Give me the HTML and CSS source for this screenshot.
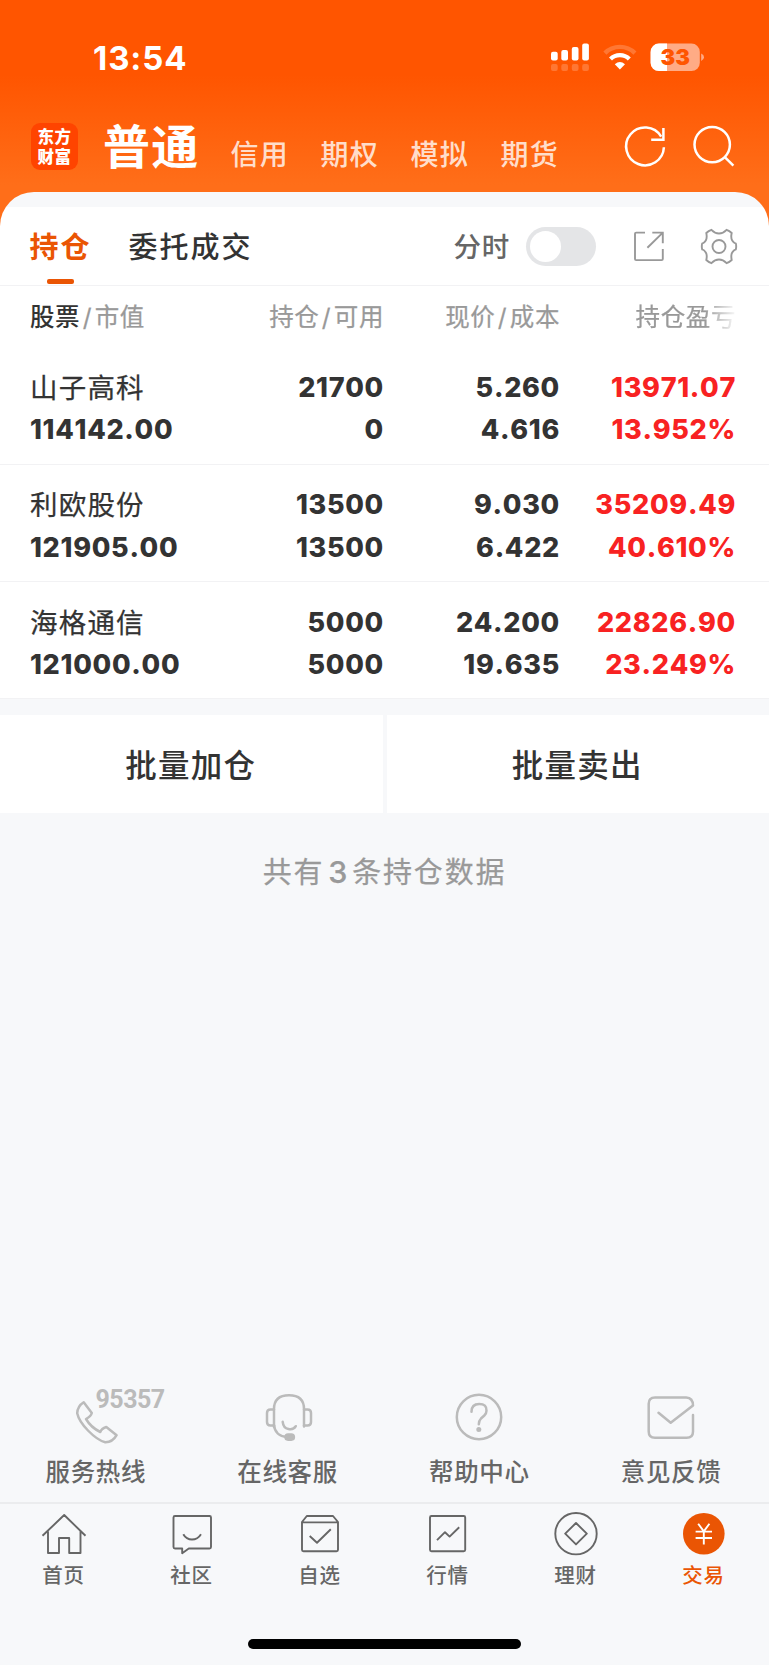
FILE: index.html
```html
<!DOCTYPE html>
<html lang="zh-CN">
<head>
<meta charset="utf-8">
<title>普通交易 - 持仓</title>
<link rel="stylesheet" href="styles.css">
</head>
<body>
<div class="app">
  <header class="hero">
    <div class="status">
      <span class="clock">13:54</span>
      <svg class="status-icons" viewBox="546 38 164 40" width="164" height="40">
        <g fill="#fff">
          <rect x="551" y="51.8" width="6.7" height="8.6" rx="2"/>
          <rect x="561.3" y="50" width="6.7" height="10.4" rx="2"/>
          <rect x="571.8" y="47" width="6.7" height="13.4" rx="2"/>
          <rect x="582.2" y="43.6" width="6.7" height="16.8" rx="2"/>
        </g>
        <g fill="#fff" opacity=".2">
          <rect x="551" y="64" width="6.7" height="7" rx="2"/>
          <rect x="561.3" y="64" width="6.7" height="7" rx="2"/>
          <rect x="571.8" y="64" width="6.7" height="7" rx="2"/>
          <rect x="582.2" y="64" width="6.7" height="7" rx="2"/>
        </g>
        <path d="M604.9 53.1A21.3 21.3 0 0 1 634.9 53.1" fill="none" stroke="#fff" stroke-opacity=".2" stroke-width="4.4"/>
        <path d="M610.5 59A13.2 13.2 0 0 1 629.3 59" fill="none" stroke="#fff" stroke-width="4.2"/>
        <path d="M614.8 64.3Q619.9 59.6 625 64.3L619.9 69.4Z" fill="#fff"/>
        <clipPath id="bat"><rect x="650.6" y="43.5" width="49.2" height="27.6" rx="8.4"/></clipPath>
        <g clip-path="url(#bat)">
          <rect x="650" y="43" width="50" height="29" fill="#ffab85"/>
          <rect x="650" y="43" width="17" height="29" fill="#fff"/>
        </g>
        <path d="M701.2 53.6Q704 54.8 704 57.2T701.2 60.9Z" fill="#ffab85"/>
        <text class="battery-text" x="675.2" y="65.3" text-anchor="middle">33</text>
      </svg>
    </div>
    <nav class="accounts">
      <div class="logo"><span>东方</span><span>财富</span></div>
      <span class="account account-on">普通</span>
      <span class="account">信用</span>
      <span class="account">期权</span>
      <span class="account">模拟</span>
      <span class="account">期货</span>
      <svg class="hero-actions" viewBox="620 122 120 50" width="120" height="50" fill="none" stroke="#fff" stroke-width="2.5">
        <path d="M663.9 147.2A18.9 18.9 0 1 1 661.2 136.6"/>
        <path d="M663.4 128V139.8H651.2"/>
        <circle cx="712.2" cy="144.6" r="17.7"/>
        <path d="M724.8 157.2L733.4 165.6"/>
      </svg>
    </nav>
  </header>

  <main class="sheet">
    <div class="tabs">
      <div class="tab tab-on">持仓</div>
      <div class="tab">委托成交</div>
      <span class="minute">分时</span>
      <span class="switch"><i></i></span>
      <svg class="tab-tools" viewBox="630 225 110 44" width="110" height="44" fill="none" stroke="#999" stroke-width="1.9">
        <path d="M645 232.6H636.2Q635 232.6 635 233.8V258.9Q635 260.1 636.2 260.1H661.6Q662.8 260.1 662.8 258.9V249"/>
        <path d="M652.3 232.6H662.8V243.3M662.8 232.6L647.4 247.8"/>
        <circle cx="719" cy="246.5" r="6.5"/>
        <path d="M711.4 229.9Q714.9 233.5 719 233.5T726.6 229.9Q729.4 230.8 731.7 233Q730.6 237.9 732.2 240.5T735.8 243.6Q736.6 246.5 735.8 249.4Q733.7 250 732.2 252.5T731.7 260Q729.4 262.2 726.6 263.1Q723.1 259.5 719 259.5T711.4 263.1Q708.6 262.2 706.3 260Q707.4 255.1 705.8 252.5T702.2 249.4Q701.4 246.5 702.2 243.6Q704.3 243 705.8 240.5T706.3 233Q708.6 230.8 711.4 229.9Z"/>
      </svg>
    </div>

    <div class="row head">
      <div><b>股票</b><em>/</em>市值</div>
      <div>持仓<em>/</em>可用</div>
      <div>现价<em>/</em>成本</div>
      <div class="fade">持仓盈亏</div>
    </div>
    <div class="row stock">
      <div><span class="name">山子高科</span><span>114142.00</span></div>
      <div><span>21700</span><span>0</span></div>
      <div><span>5.260</span><span>4.616</span></div>
      <div class="up"><span>13971.07</span><span>13.952%</span></div>
    </div>
    <div class="row stock">
      <div><span class="name">利欧股份</span><span>121905.00</span></div>
      <div><span>13500</span><span>13500</span></div>
      <div><span>9.030</span><span>6.422</span></div>
      <div class="up"><span>35209.49</span><span>40.610%</span></div>
    </div>
    <div class="row stock">
      <div><span class="name">海格通信</span><span>121000.00</span></div>
      <div><span>5000</span><span>5000</span></div>
      <div><span>24.200</span><span>19.635</span></div>
      <div class="up"><span>22826.90</span><span>23.249%</span></div>
    </div>
  </main>

  <div class="batch">
    <div>批量加仓</div>
    <div>批量卖出</div>
  </div>
  <p class="count">共有<em>3</em>条持仓数据</p>

  <section class="services">
    <div class="service">
      <svg viewBox="0 0 52 52" width="52" height="52">
        <path d="M13.7 9.2L21.8 20Q20.8 23.5 16 26Q21 34.5 30.3 39Q31.5 35.5 36.3 34L46.6 42.2Q42.5 49.5 35.2 49.3C25 46.5 9.5 31 7.2 20.2Q7.5 13 13.7 9.2Z"/>
      </svg>
      <span class="hotline">95357</span>
      <span class="service-label">服务热线</span>
    </div>
    <div class="service">
      <svg viewBox="0 0 52 52" width="52" height="52">
        <path d="M12 34V16Q12 2.2 27 2.2T42 16V33.4"/>
        <path d="M12 16.4H8.5Q5 16.4 5 19.9V29Q5 32.5 8.5 32.5H12M42 16.4H45.5Q49 16.4 49 19.9V29Q49 32.5 45.5 32.5H42"/>
        <path d="M12 32Q13 43 25 44M20.7 28.8C21.5 37.5 31 38 33.8 33.2"/>
        <rect x="23.5" y="41.5" width="8.4" height="5.2" rx="2.6" fill="#bbb"/>
      </svg>
      <span class="service-label">在线客服</span>
    </div>
    <div class="service">
      <svg viewBox="0 0 52 52" width="52" height="52">
        <circle cx="26" cy="24" r="22.2"/>
        <path d="M18.5 18.8Q18.5 11 26.2 11T33.5 17.8Q33.5 20.3 31.3 22.5L28 25.5Q25.8 27.8 25.8 31.2"/>
        <circle cx="25.8" cy="36.6" r="2.5" fill="#bbb" stroke="none"/>
      </svg>
      <span class="service-label">帮助中心</span>
    </div>
    <div class="service">
      <svg viewBox="0 0 52 52" width="52" height="52">
        <path d="M48 22V38.5Q48 44.8 41.7 44.8H10Q3.7 44.8 3.7 38.5V10.8Q3.7 4.5 10 4.5H41.2Q48 5 48 12.5L25.7 29.8L13.5 19.8"/>
      </svg>
      <span class="service-label">意见反馈</span>
    </div>
  </section>

  <footer class="tabbar">
    <div class="item">
      <svg viewBox="0 0 48 48" width="48" height="48"><path d="M2.5 25.8L24.2 5L45.5 25.8M8 21.5V43H19V28H29.2V43H40.5V21.5"/></svg>
      <span>首页</span>
    </div>
    <div class="item">
      <svg viewBox="0 0 48 48" width="48" height="48"><path d="M7 6H41.5Q43 6 43 7.5V37Q43 38.5 41.5 38.5H20.8L14.2 43.2V38.5H7Q5.5 38.5 5.5 37V7.5Q5.5 6 7 6ZM15.3 24.2Q18.3 29.5 24 29.5T33 24.2"/></svg>
      <span>社区</span>
    </div>
    <div class="item">
      <svg viewBox="0 0 48 48" width="48" height="48"><path d="M6 12L10.8 6H37L42 12V39.8Q42 41.3 40.5 41.3H7.5Q6 41.3 6 39.8ZM6 12.4H42M13.7 26L21 32.8L34.8 19.3"/></svg>
      <span>自选</span>
    </div>
    <div class="item">
      <svg viewBox="0 0 48 48" width="48" height="48"><rect x="6" y="6" width="35.2" height="35.2" rx="1.5"/><path d="M13 30.2L21 22.2L25.6 26.6L35.2 17.2"/></svg>
      <span>行情</span>
    </div>
    <div class="item">
      <svg viewBox="0 0 48 48" width="48" height="48"><circle cx="24" cy="23.7" r="20.7"/><path d="M24 13L34.8 23.7L24 34.4L13.2 23.7Z"/></svg>
      <span>理财</span>
    </div>
    <div class="item item-on">
      <svg viewBox="0 0 48 48" width="48" height="48"><circle cx="23.8" cy="23.8" r="20.8" fill="#ea5504" stroke="none"/><path d="M18.2 13.8L23.8 21.4L29.4 13.8M23.8 21.4V34.5M15.6 21.6H32M15.6 28H32" stroke="#fff"/></svg>
      <span>交易</span>
    </div>
  </footer>
  <div class="home-bar"></div>
</div>
</body>
</html>
```

FILE: styles.css
```css
* { box-sizing: border-box; }

body {
  margin: 0;
  background: #f7f8fa;
  font-family: Inter, "Noto Sans CJK SC", sans-serif;
  color: #333;
}

.app {
  width: 769px;
  height: 1665px;
  display: flex;
  flex-direction: column;
  overflow: hidden;
}

em, b { font-style: normal; font-weight: inherit; }

/* Header */
.hero {
  height: 240px;
  flex: none;
  background: linear-gradient(#ff5500 0, #ff5500 75px, #ff6e19 185px);
}

.status {
  height: 116px;
  padding: 38px 59px 0 93px;
  display: flex;
  justify-content: space-between;
  align-items: flex-start;
}

.clock {
  font-size: 33px;
  font-weight: 700;
  line-height: 40px;
  letter-spacing: .9px;
  color: #fff;
}

.battery-text {
  font: 900 22px Inter, sans-serif;
  fill: #ff5500;
}

.accounts {
  display: flex;
  height: 76px;
  padding-left: 31px;
  color: #fff;
}

.logo {
  width: 47px;
  height: 47px;
  margin: 7px 25px 0 0;
  padding-top: 4px;
  border-radius: 9px;
  background: #ff4400;
  display: flex;
  flex-direction: column;
  align-items: center;
  font-weight: 900;
  font-size: 16.5px;
  line-height: 20px;
  letter-spacing: .6px;
}

.account {
  width: 90px;
  padding-top: 20px;
  font-size: 28px;
  line-height: 38px;
  letter-spacing: 1.2px;
  font-weight: 500;
  color: rgba(255, 255, 255, .8);
}

.account-on {
  width: 127.5px;
  padding-top: 6px;
  font-size: 47px;
  line-height: 50px;
  letter-spacing: 1.2px;
  font-weight: 700;
  color: #fff;
}

.hero-actions { margin: 6px 0 0 29.5px; flex: none; }

/* Sheet */
.sheet {
  margin-top: -48px;
  padding-top: 15px;
  flex: none;
  border-radius: 34px 34px 0 0;
  background: linear-gradient(#f7f8fa 15px, #fff 15px);
}

.tabs {
  height: 79px;
  padding-left: 29.5px;
  display: flex;
  border-bottom: 1px solid #f2f2f4;
}

.tab {
  width: 162px;
  font-size: 29px;
  line-height: 81px;
  letter-spacing: 2px;
  font-weight: 500;
}

.tab-on {
  position: relative;
  width: 99px;
  color: #ea5504;
  font-weight: 700;
}

.tab-on::after {
  content: "";
  position: absolute;
  left: 17.5px;
  bottom: 1px;
  width: 27px;
  height: 5.5px;
  border-radius: 2px;
  background: #ea5504;
}

.minute {
  margin-left: 163px;
  width: 72px;
  font-size: 27.5px;
  line-height: 81px;
  letter-spacing: .8px;
  color: #666;
  font-weight: 500;
}

.switch {
  width: 70.5px;
  height: 39px;
  margin-top: 20px;
  padding: 4px;
  border-radius: 20px;
  background: #e4e5e7;
}

.switch i {
  display: block;
  width: 31px;
  height: 31px;
  border-radius: 50%;
  background: #fff;
}

.tab-tools { margin: 18px 0 0 34px; flex: none; }

/* Holdings */
.row {
  display: grid;
  grid-template-columns: 174px 180px 176px 176px;
  padding-left: 30px;
  text-align: right;
}

.row > :first-child { text-align: left; }

.head {
  height: 61.5px;
  font-size: 24.5px;
  line-height: 63px;
  letter-spacing: .6px;
  color: #999;
  -webkit-text-stroke: .25px;
}

.head em { margin: 0 2.5px; }
.head b { color: #333; font-weight: 500; -webkit-text-stroke: 0; }

.fade {
  -webkit-mask-image: linear-gradient(90deg, #000 145px, transparent 178px);
  mask-image: linear-gradient(90deg, #000 145px, transparent 178px);
}

.stock {
  height: 117.33px;
  padding-top: 19.5px;
  border-bottom: 1.5px solid #f2f2f4;
  font-size: 27px;
  line-height: 42.3px;
  font-weight: 800;
  font-kerning: none;
  letter-spacing: .7px;
}

.stock span { display: block; }
.stock .name {
  font-size: 27.5px;
  font-weight: 400;
  letter-spacing: 1.2px;
  -webkit-text-stroke: .25px;
}
.up { color: #f82222; }

.batch {
  margin-top: 15.5px;
  height: 98px;
  flex: none;
  display: grid;
  grid-template-columns: 1fr 1fr;
  grid-template-rows: 98px;
  gap: 4px;
  text-align: center;
  font-size: 31.5px;
  line-height: 101px;
  letter-spacing: 1.2px;
  font-weight: 500;
}

.batch div {
  background: #fff;
  padding-right: 1px;
}

.count {
  margin: 38px 0 0;
  text-align: center;
  font-size: 29px;
  line-height: 42px;
  letter-spacing: 1.8px;
  color: #999;
  -webkit-text-stroke: .25px;
}

.count em { margin: 0 3px 0 4px; font-size: 30.5px; font-weight: 500; }

/* Support links */
.services {
  margin-top: auto;
  height: 112px;
  flex: none;
  width: 767px;
  display: grid;
  grid-template-columns: repeat(4, 1fr);
}

.service {
  position: relative;
  display: flex;
  flex-direction: column;
  align-items: center;
}

.service svg {
  margin-top: 2.5px;
  fill: none;
  stroke: #bbb;
  stroke-width: 2.5;
  stroke-linecap: round;
  stroke-linejoin: round;
}

.service-label {
  margin-top: 9.5px;
  font-size: 24.5px;
  line-height: 36px;
  letter-spacing: .7px;
  font-weight: 500;
  color: #666;
}

.hotline {
  position: absolute;
  left: 95.5px;
  top: -3px;
  font: 700 25px/26px Roboto, sans-serif;
  letter-spacing: -.5px;
  color: #bbb;
}

/* Bottom navigation */
.tabbar {
  height: 137px;
  flex: none;
  padding-right: 1px;
  border-top: 2px solid #ebecee;
  display: grid;
  grid-template-columns: repeat(6, 1fr);
}

.item {
  display: flex;
  flex-direction: column;
  align-items: center;
  padding-top: 6px;
  font-size: 20.5px;
  line-height: 35px;
  letter-spacing: .8px;
  font-weight: 500;
  color: #666;
}

.item span { margin-right: 1px; }

.item svg {
  fill: none;
  stroke: #666;
  stroke-width: 1.9;
  stroke-linejoin: round;
}

.item-on { color: #ea5504; }

.home-bar {
  flex: none;
  width: 273px;
  height: 10px;
  margin: 0 auto 16px;
  border-radius: 5px;
  background: #000;
}
```
